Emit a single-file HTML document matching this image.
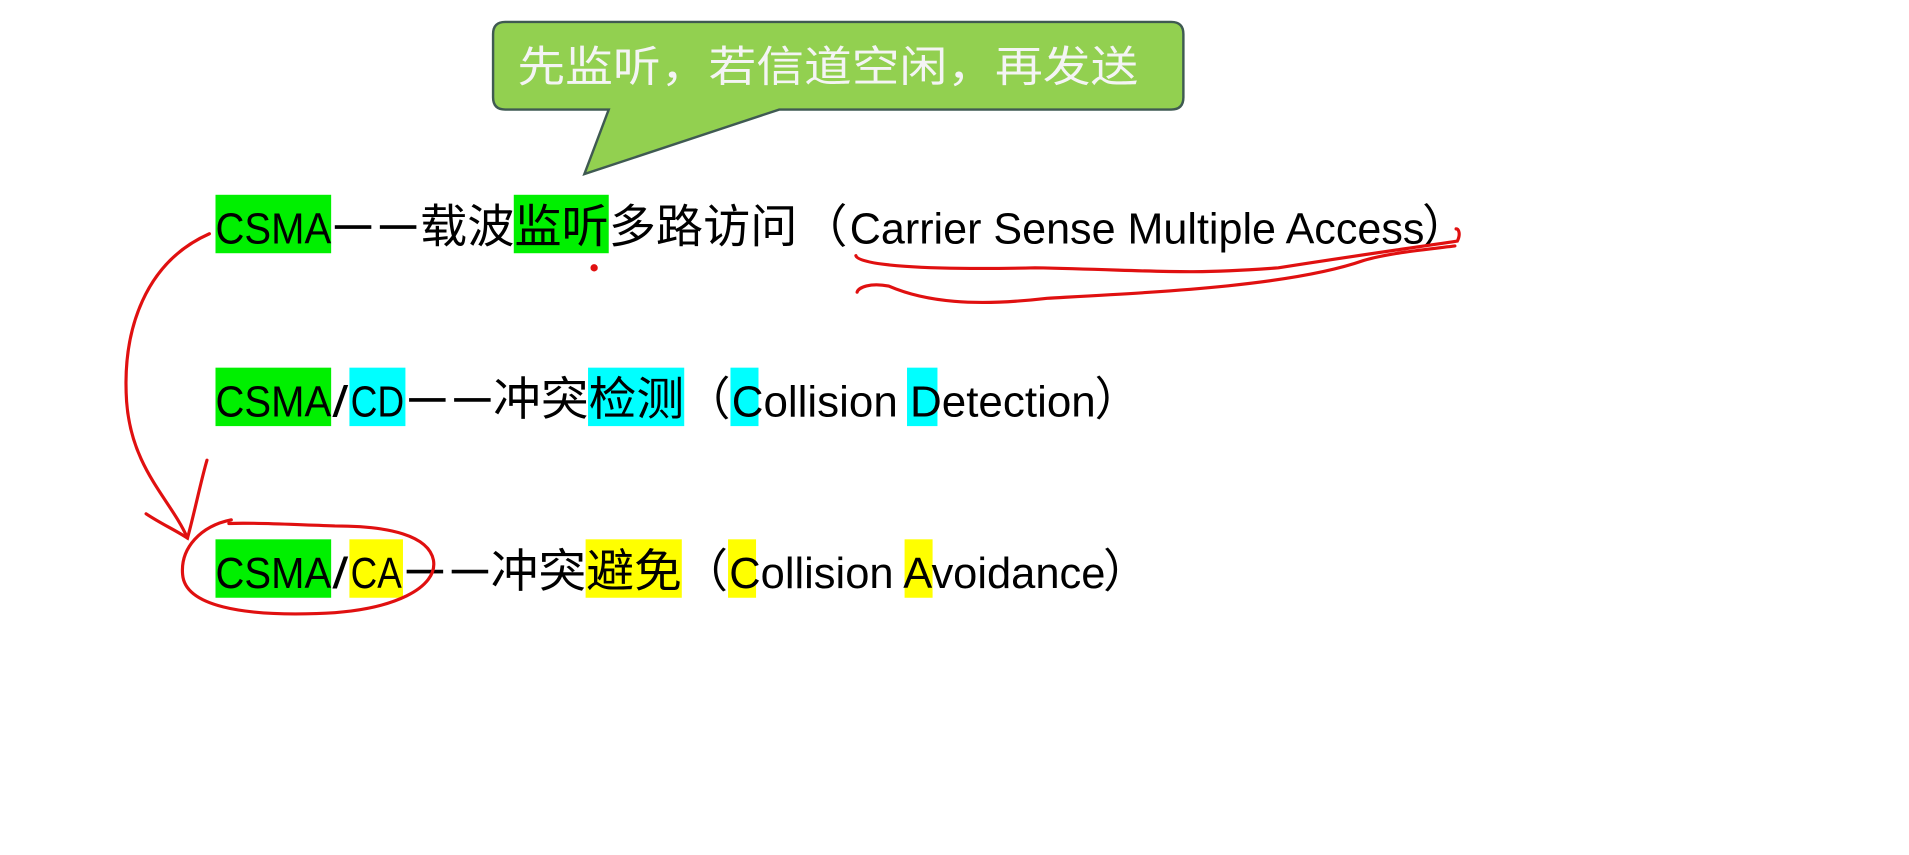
<!DOCTYPE html>
<html><head><meta charset="utf-8"><style>
html,body{margin:0;padding:0;background:#fff;width:1909px;height:855px;overflow:hidden}
svg{display:block}
text{font-family:"Liberation Sans","Noto Sans CJK SC",sans-serif;fill:#000}
.cj{font-size:38px}
.la{font-size:36px}
</style></head><body>
<svg width="1909" height="855" viewBox="0 0 1568 702.3" preserveAspectRatio="none">
<path d="M415,18 H962 Q972,18 972,28 V80 Q972,90 962,90 H640 L480,143 L500,90 H415 Q405,90 405,80 V28 Q405,18 415,18 Z" fill="#92d050" stroke="#3f5a52" stroke-width="2"/>
<text x="425" y="67" font-size="35" style="fill:#f4f4f4" textLength="510" lengthAdjust="spacingAndGlyphs">先监听，若信道空闲，再发送</text>

<rect x="177" y="160" width="95" height="48" fill="#00f000"/>
<rect x="422" y="160" width="78" height="48" fill="#00f000"/>
<text class="la" x="177" y="200" textLength="95" lengthAdjust="spacingAndGlyphs">CSMA</text>
<rect x="275" y="185" width="30" height="3"/><rect x="312" y="185" width="30" height="3"/>
<text class="cj" x="345" y="199" textLength="155" lengthAdjust="spacingAndGlyphs">载波监听</text>
<text class="cj" x="500" y="199" textLength="155" lengthAdjust="spacingAndGlyphs">多路访问</text>
<text class="cj" x="658" y="199">（</text>
<text class="la" x="698" y="200" textLength="472" lengthAdjust="spacingAndGlyphs">Carrier Sense Multiple Access</text>
<text class="cj" x="1168" y="199">）</text>

<rect x="177" y="302" width="95" height="48" fill="#00f000"/>
<rect x="287" y="302" width="46" height="48" fill="#00ffff"/>
<rect x="483" y="302" width="79" height="48" fill="#00ffff"/>
<rect x="600" y="302" width="23" height="48" fill="#00ffff"/>
<rect x="745" y="302" width="25" height="48" fill="#00ffff"/>
<text class="la" x="177" y="342" textLength="95" lengthAdjust="spacingAndGlyphs">CSMA</text>
<text class="la" x="273" y="342" textLength="13" lengthAdjust="spacingAndGlyphs">/</text>
<text class="la" x="288" y="342" textLength="44" lengthAdjust="spacingAndGlyphs">CD</text>
<rect x="336" y="327" width="30" height="3"/><rect x="373" y="327" width="30" height="3"/>
<text class="cj" x="405" y="341" textLength="157" lengthAdjust="spacingAndGlyphs">冲突检测</text>
<text class="cj" x="562" y="341">（</text>
<text class="la" x="601" y="342" textLength="299" lengthAdjust="spacingAndGlyphs">Collision Detection</text>
<text class="cj" x="899" y="341">）</text>

<rect x="177" y="443" width="95" height="48" fill="#00f000"/>
<rect x="287" y="443" width="44" height="48" fill="#ffff00"/>
<rect x="481" y="443" width="79" height="48" fill="#ffff00"/>
<rect x="598" y="443" width="23" height="48" fill="#ffff00"/>
<rect x="743" y="443" width="23" height="48" fill="#ffff00"/>
<text class="la" x="177" y="483" textLength="95" lengthAdjust="spacingAndGlyphs">CSMA</text>
<text class="la" x="273" y="483" textLength="13" lengthAdjust="spacingAndGlyphs">/</text>
<text class="la" x="288" y="483" textLength="42" lengthAdjust="spacingAndGlyphs">CA</text>
<rect x="334" y="468" width="30" height="3"/><rect x="371" y="468" width="30" height="3"/>
<text class="cj" x="403" y="482" textLength="157" lengthAdjust="spacingAndGlyphs">冲突避免</text>
<text class="cj" x="560" y="482">（</text>
<text class="la" x="599" y="483" textLength="309" lengthAdjust="spacingAndGlyphs">Collision Avoidance</text>
<text class="cj" x="906" y="482">）</text>

<g fill="none" stroke="#e01010" stroke-width="2.6" stroke-linecap="round">
<path d="M172,192 C120,215 100,270 104,330 C108,385 140,410 154,442"/>
<path d="M120,422 C132,430 145,436 154,442 C160,420 165,395 170,378"/>
<path d="M190,427 C165,432 148,450 150,472 C152,498 200,506 260,504 C325,502 360,482 356,460 C352,440 320,432 275,432 C240,431 210,429 188,430"/>
<path d="M703,210 C705,218 760,222 850,220 C950,222 970,226 1050,220 C1100,212 1150,205 1197,198 C1200,192 1198,188 1196,188"/>
<path d="M1195,202 C1170,205 1140,208 1120,214 C1060,235 950,240 860,245 C800,252 760,248 730,235 C715,232 705,236 704,240"/>
</g>
<circle cx="488" cy="220" r="3" fill="#e01010"/>
</svg>
</body></html>
